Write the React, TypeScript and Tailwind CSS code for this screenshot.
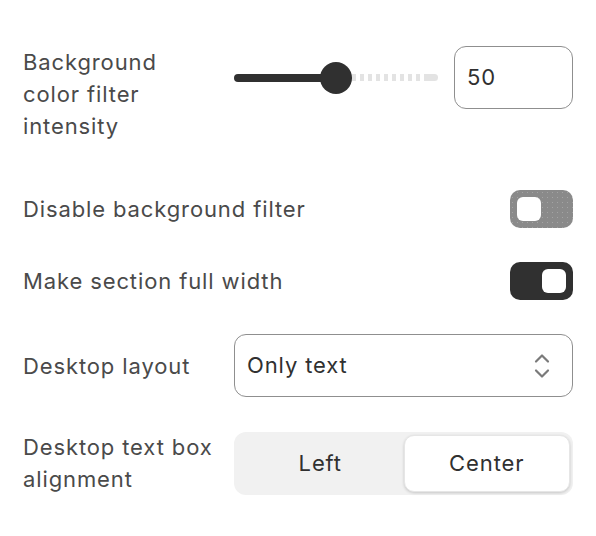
import { useState } from "react";

function Toggle({ on, muted, onChange }: { on: boolean; muted?: boolean; onChange: () => void }) {
  return (
    <button
      onClick={onChange}
      className={`relative flex h-[38px] w-[63px] items-center rounded-[10px] px-[7px] ${
        on ? "justify-end bg-[#303030]" : "justify-start bg-[#8a8a8a]"
      }`}
      style={
        muted
          ? {
              backgroundImage: "radial-gradient(circle, rgba(255,255,255,0.22) 0.7px, transparent 1px)",
              backgroundSize: "5px 5px",
            }
          : undefined
      }
    >
      <span className="block h-[24px] w-[24px] rounded-[6px] bg-white" />
    </button>
  );
}

export default function App() {
  const [intensity] = useState(50);
  const [disableFilter, setDisableFilter] = useState(false);
  const [fullWidth, setFullWidth] = useState(true);
  const [align, setAlign] = useState<"left" | "center">("center");

  const label = "text-[22px] leading-[32px] text-[#4a4a4a]";

  return (
    <div className="min-h-[536px] w-[596px] bg-white px-[23px] pt-[46px] font-['Inter',sans-serif] tracking-[0.055em]">
      <div className="flex flex-col gap-[34px]">
        {/* Intensity */}
        <div className="mb-[14px] grid grid-cols-[211px_1fr] items-start">
          <div className={`${label} w-[180px]`}>Background color filter intensity</div>
          <div className="flex h-[63px] items-center gap-[16px]">
            <div className="relative flex h-[32px] flex-1 items-center">
              <div className="h-[8px] w-[102px] rounded-l-full bg-[#303030]" />
              <div
                className="h-[7px] flex-1 rounded-r-full"
                style={{
                  background:
                    "linear-gradient(to right, transparent 0, transparent 90%, #e3e3e3 90%), repeating-linear-gradient(to right, #e3e3e3 0 4px, transparent 4px 8px)",
                  backgroundSize: "100% 100%",
                }}
              />
              <div
                className="absolute top-0 h-[32px] w-[32px] rounded-full bg-[#303030]"
                style={{ left: `${intensity * 2.04 - 16}px` }}
              />
            </div>
            <div className="flex h-[63px] w-[119px] items-center rounded-[12px] border border-[#8f8f8f] px-[12px] text-[22px] text-[#303030]">
              {intensity}
            </div>
          </div>
        </div>

        {/* Disable filter */}
        <div className="flex items-center justify-between">
          <span className={label}>Disable background filter</span>
          <Toggle on={disableFilter} muted onChange={() => setDisableFilter(!disableFilter)} />
        </div>

        {/* Full width */}
        <div className="flex items-center justify-between">
          <span className={label}>Make section full width</span>
          <Toggle on={fullWidth} onChange={() => setFullWidth(!fullWidth)} />
        </div>

        {/* Desktop layout */}
        <div className="grid grid-cols-[211px_1fr] items-center">
          <span className={label}>Desktop layout</span>
          <div className="flex h-[63px] items-center justify-between rounded-[12px] border border-[#8f8f8f] pl-[12px] pr-[22px] text-[22px] text-[#303030]">
            <span>Only text</span>
            <svg width="16" height="26" viewBox="0 0 16 26" fill="none" stroke="#7a7a7a" strokeWidth="2.2" strokeLinecap="round" strokeLinejoin="round">
              <path d="M2 8.5 L8 2.5 L14 8.5" />
              <path d="M2 17.5 L8 23.5 L14 17.5" />
            </svg>
          </div>
        </div>

        {/* Alignment */}
        <div className="grid grid-cols-[211px_1fr] items-center">
          <span className={label}>Desktop text box alignment</span>
          <div className="grid h-[63px] grid-cols-2 rounded-[12px] bg-[#f1f1f1] p-[3px] text-[22px] text-[#303030]">
            <button
              onClick={() => setAlign("left")}
              className={`rounded-[10px] ${align === "left" ? "bg-white shadow-[0_1px_3px_rgba(0,0,0,0.18)] border border-[#e6e6e6]" : ""}`}
            >
              Left
            </button>
            <button
              onClick={() => setAlign("center")}
              className={`rounded-[10px] ${align === "center" ? "bg-white shadow-[0_1px_3px_rgba(0,0,0,0.18)] border border-[#e6e6e6]" : ""}`}
            >
              Center
            </button>
          </div>
        </div>
      </div>
    </div>
  );
}
